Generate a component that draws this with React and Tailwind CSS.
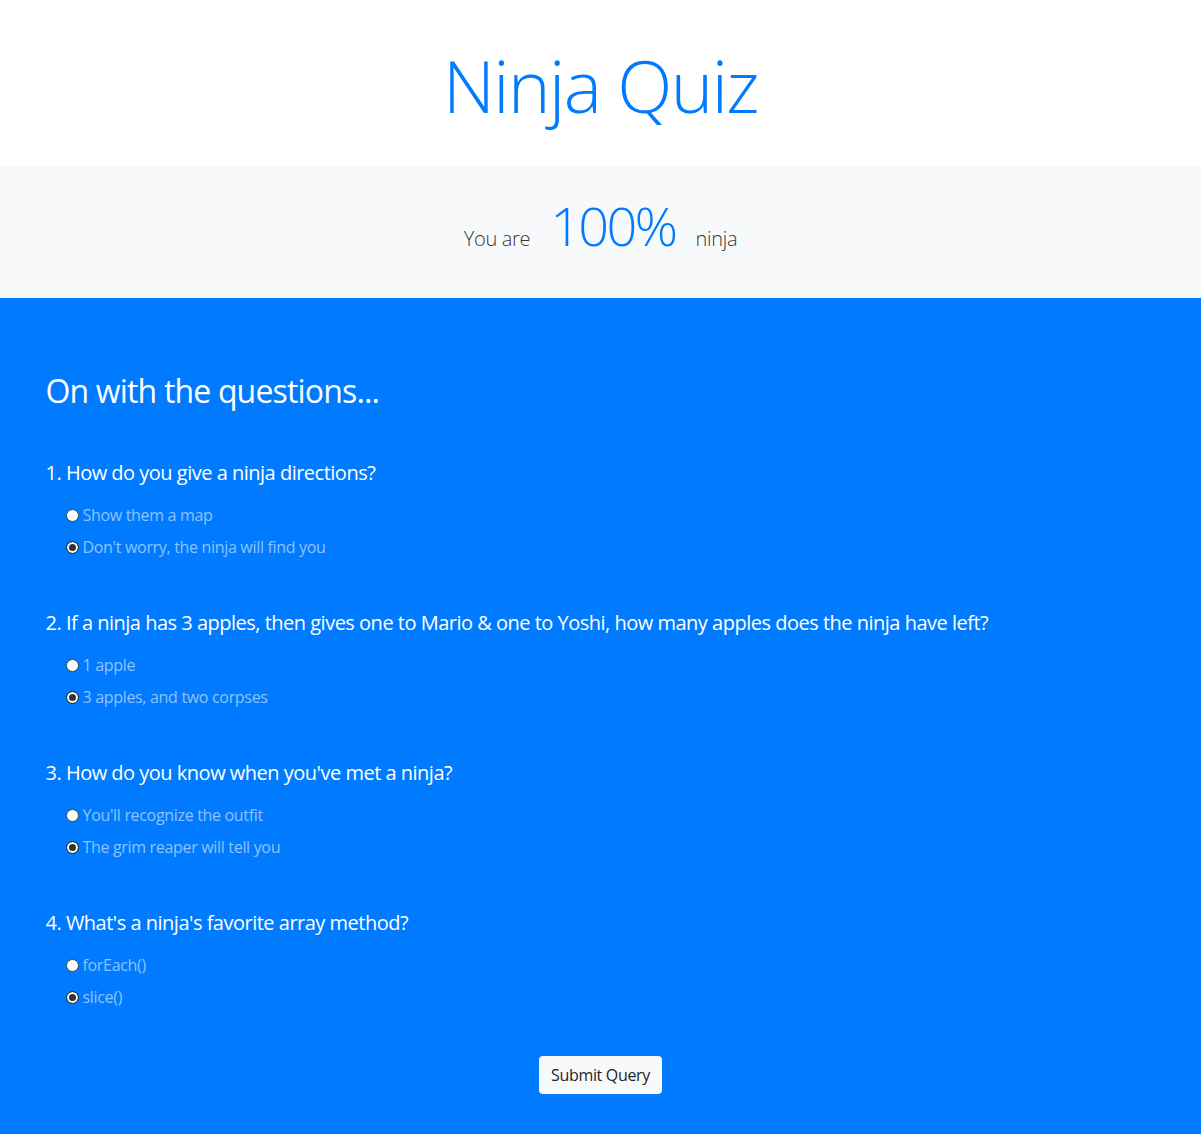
import React from "react";

const questions = [
  {
    q: "1. How do you give a ninja directions?",
    name: "q1",
    options: ["Show them a map", "Don't worry, the ninja will find you"],
  },
  {
    q: "2. If a ninja has 3 apples, then gives one to Mario & one to Yoshi, how many apples does the ninja have left?",
    name: "q2",
    options: ["1 apple", "3 apples, and two corpses"],
  },
  {
    q: "3. How do you know when you've met a ninja?",
    name: "q3",
    options: ["You'll recognize the outfit", "The grim reaper will tell you"],
  },
  {
    q: "4. What's a ninja's favorite array method?",
    name: "q4",
    options: ["forEach()", "slice()"],
  },
];

function Question({ item }) {
  return (
    <div>
      <h5 className="text-[20px] leading-[24px] tracking-[-0.025em] text-white mb-[18px]">{item.q}</h5>
      {item.options.map((opt, i) => (
        <label key={i} className="flex items-center pl-5 h-6 mb-2 text-[16px] text-[#8fc3ff]">
          <input
            type="radio"
            name={item.name}
            defaultChecked={i === 1}
            className="appearance-none w-[13px] h-[13px] rounded-full border border-[#444] bg-white checked:border-[#333] checked:bg-[#333] checked:shadow-[inset_0_0_0_2px_#fff] mr-1"
          />
          <span>{opt}</span>
        </label>
      ))}
    </div>
  );
}

export default function App() {
  return (
    <div className="font-['Open_Sans',sans-serif] tracking-[-0.02em] text-[#212529]">
      <header className="h-[166px] flex items-center justify-center bg-white pt-[5px]">
        <h1 className="text-[72px] font-light leading-[1.2] tracking-[-0.022em] text-[#007bff]">Ninja Quiz</h1>
      </header>

      <div className="h-[132px] bg-[#f8f9fa] flex items-center justify-center pb-[14px]">
        <p className="flex items-baseline gap-5 text-[20px] font-light text-[#343a40]">
          <span>You are</span>
          <span className="text-[54px] leading-[1.2] tracking-[-0.05em] text-[#007bff]">100%</span>
          <span>ninja</span>
        </p>
      </div>

      <section className="bg-[#007bff] pt-[74px] pb-10">
        <div className="max-w-[1140px] mx-auto px-[15px]">
          <h2 className="text-[32px] leading-[1.2] tracking-[-0.026em] text-white mb-[51px]">On with the questions...</h2>
          <form>
            <div className="flex flex-col gap-[44px]">
              {questions.map((item) => (
                <Question key={item.name} item={item} />
              ))}
            </div>
            <div className="flex justify-center mt-[39px]">
              <button
                type="button"
                className="bg-[#f8f9fa] text-[#212529] text-[16px] leading-6 px-3 py-[7px] rounded"
              >
                Submit Query
              </button>
            </div>
          </form>
        </div>
      </section>
    </div>
  );
}
